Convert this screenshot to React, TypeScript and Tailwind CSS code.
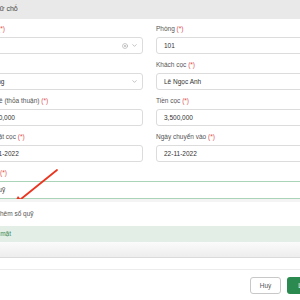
import { ChevronDown, CircleX, Plus } from 'lucide-react'

function Label({ text }: { text: string }) {
  return (
    <div className="mb-[3px] h-[10px] leading-[10px] text-[#555] whitespace-nowrap">
      {text} <span className="text-[#e05050]">(*)</span>
    </div>
  )
}

function Field({ label, value, required = true }: { label: string; value: string; required?: boolean }) {
  return (
    <div>
      {required ? (
        <Label text={label} />
      ) : (
        <div className="mb-[3px] h-[10px] leading-[10px] text-[#555]">{label}</div>
      )}
      <div className="flex h-[17px] items-center rounded-[3px] border border-[#dcdcdc] px-[7px] text-[#333]">
        {value}
      </div>
    </div>
  )
}

function SelectField({ label, value, clear, required = true }: { label: string; value: string; clear?: boolean; required?: boolean }) {
  return (
    <div>
      {required ? (
        <Label text={label} />
      ) : (
        <div className="mb-[3px] h-[10px] leading-[10px] text-[#555]">{label}</div>
      )}
      <div className="flex h-[17px] items-center rounded-[3px] border border-[#dcdcdc] pl-[7px] pr-[4px] text-[#333]">
        <span className="flex-1 whitespace-nowrap">{value}</span>
        {clear && <CircleX size={6} strokeWidth={2.2} className="mr-[3px] text-[#a0a0a0]" />}
        <ChevronDown size={7} strokeWidth={2} className="text-[#999]" />
      </div>
    </div>
  )
}

export default function App() {
  return (
    <div className="relative h-[300px] w-[300px] overflow-hidden bg-white font-['Liberation_Sans',Arial,sans-serif] text-[6.5px]">
      <div className="-ml-[34px] w-[367px]">
        <div className="flex h-[19px] items-center bg-[#e9e9e9] pl-[14px] text-[7px] text-[#444]">
          Cọc giữ chỗ
        </div>

        <div className="px-[12px] pt-[5px] pb-[70px]">
          <div className="grid grid-cols-2 gap-x-[13px] gap-y-[6px]">
            <SelectField label="Cơ sở" value="" clear />
            <Field label="Phòng" value="101" />
            <SelectField label="Loại" value="Tháng" required={false} />
            <Field label="Khách cọc" value="Lê Ngọc Anh" />
            <Field label="Giá thuê (thỏa thuận)" value="3,500,000" />
            <Field label="Tiền cọc" value="3,500,000" />
            <Field label="Ngày đặt cọc" value="20-11-2022" />
            <Field label="Ngày chuyển vào" value="22-11-2022" />
          </div>

          <div className="mt-[6px]">
            <Label text="Sổ quỹ" />
            <div className="relative">
              <div className="flex h-[18px] items-center border-y border-[#a9d4b7] px-[7px] text-[#444]">
                Sổ quỹ
              </div>
              <div className="absolute left-0 right-0 top-full z-10 border-b border-[#dadada] bg-white">
                <div className="h-[3px] bg-[#f4f4f4]" />
                <div className="flex h-[24px] items-center gap-[3px] px-[8px] text-[#555]">
                  <Plus size={7} strokeWidth={2} />
                  Thêm sổ quỹ
                </div>
                <div className="flex h-[16px] items-center bg-[#e3eee7] px-[8px] text-[#3c8a5c]">
                  Tiền mặt
                </div>
                <div className="h-[15px] bg-gradient-to-b from-[#fbfbfb] to-[#ededed]" />
              </div>
            </div>
          </div>
        </div>

        <div className="flex justify-end gap-[6px] border-t border-[#ececec] px-[12px] pt-[7px]">
          <button className="flex h-[17px] w-[31px] items-center justify-center rounded-[3px] border border-[#c8c8c8] bg-white text-[#555]">
            Huỷ
          </button>
          <button className="flex h-[17px] w-[34px] items-center justify-center rounded-[3px] bg-[#2b8a4f] text-white">
            Lưu
          </button>
        </div>
      </div>

      <svg className="pointer-events-none absolute left-0 top-0" width="300" height="300">
        <line x1="57" y1="170" x2="21" y2="199" stroke="#ea3620" strokeWidth="1.8" strokeLinecap="round" />
        <polygon points="12,207 24.5,204 18,196" fill="#ea3620" />
      </svg>
    </div>
  )
}
